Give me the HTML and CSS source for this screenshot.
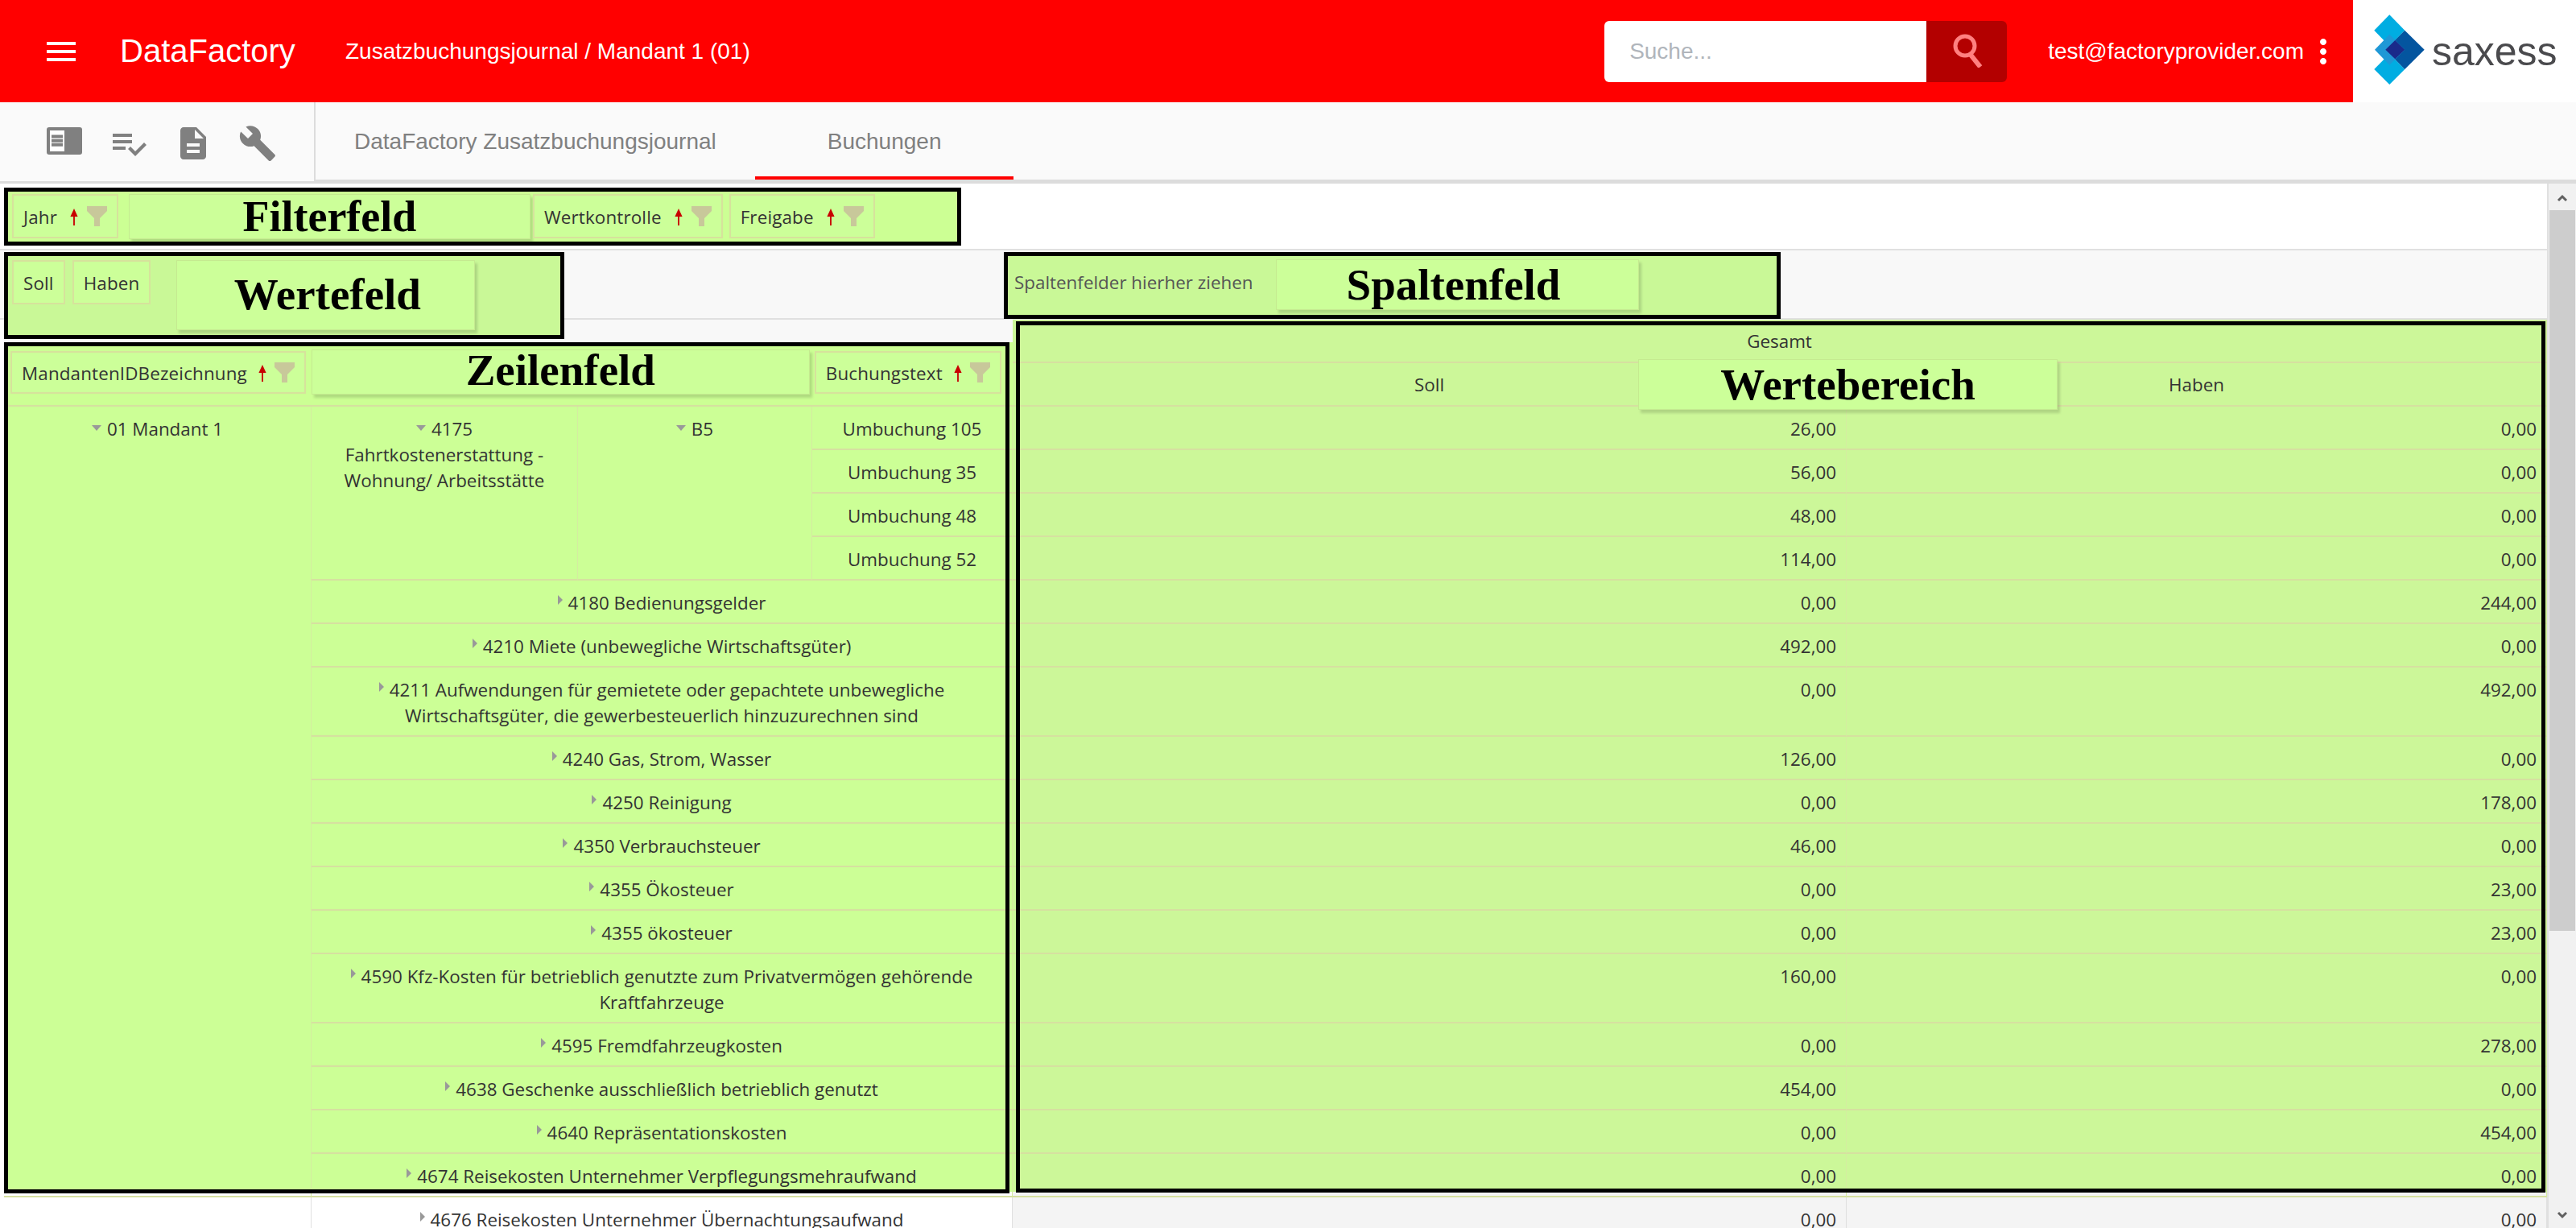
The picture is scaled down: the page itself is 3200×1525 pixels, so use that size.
FILE: index.html
```html
<!DOCTYPE html>
<html lang="de">

<head>
    <meta charset="UTF-8">
    <title>DataFactory Zusatzbuchungsjournal</title>
    <link rel="stylesheet" href="styles.css">
</head>

<body>
    <svg class="defs" width="0" height="0">
        <symbol id="sort-up" viewBox="0 0 12 24">
            <path d="M6 1l5 11H7v12H5V12H1z" fill="#c80000" />
        </symbol>
        <symbol id="funnel" viewBox="0 0 25 25">
            <path d="M0 0h25v6l-9 9v10H9V15L0 6z" fill="#c8c89a" />
        </symbol>
    </svg>

    <header class="topbar">
        <svg class="menu-icon" viewBox="0 0 24 24" fill="#fff">
            <path d="M3 18h18v-2H3v2zm0-5h18v-2H3v2zm0-7v2h18V6H3z" />
        </svg>
        <span class="brand">DataFactory</span>
        <span class="page-title">Zusatzbuchungsjournal / Mandant 1 (01)</span>
        <div class="search">
            <input class="search-input" type="text" placeholder="Suche...">
            <button class="search-button">
                <svg width="44" height="44" viewBox="0 0 44 44" fill="none" stroke="#ff8080">
                    <circle cx="17" cy="17" r="12" stroke-width="5" />
                    <path d="M24 28l12 15" stroke-width="6" />
                </svg>
            </button>
        </div>
        <span class="user">test@factoryprovider.com</span>
        <svg class="more-icon" viewBox="0 0 24 24" fill="#fff">
            <path d="M12 8c1.1 0 2-.9 2-2s-.9-2-2-2-2 .9-2 2 .9 2 2 2zm0 2c-1.1 0-2 .9-2 2s.9 2 2 2 2-.9 2-2-.9-2-2-2zm0 6c-1.1 0-2 .9-2 2s.9 2 2 2 2-.9 2-2-.9-2-2-2z" />
        </svg>
        <div class="logo">
            <svg width="98" height="127" viewBox="0 0 98 127">
                <path d="M26.3 37.7L45.3 18.3l19 19.4-19 19.6z" fill="#00ade2" />
                <path d="M26.3 86l19-19.3 19 19.3-19 19z" fill="#00ade2" />
                <path d="M64.3 37.7l24.4 24-24.4 24.3-24-24.3z" fill="#04559f" />
                <path d="M45.3 42.7l19 19-19 19-18.3-19z" fill="#1f98d6" />
                <path d="M52.3 50l12 11.7-12 11.6-12-11.6z" fill="#1a2a8a" />
            </svg>
            <span class="logo-text">saxess</span>
        </div>
    </header>

    <nav class="toolbar">
        <div class="tools">
            <svg viewBox="0 0 24 24" fill="#808080">
                <rect x="1" y="2" width="22" height="17" rx="1.5" />
                <path d="M3 4h9v13H3z" fill="#fff" />
                <path d="M4 6.8h7v2H4zm0 2.6h7v2H4zm0 2.5h7v2H4z" />
            </svg>
            <svg viewBox="0 0 24 24" fill="#808080">
                <path d="M14 10H2v2h12v-2zm0-4H2v2h12V6zM2 16h8v-2H2v2zm19.5-4.5L23 13l-6.99 7-4.51-4.5L13 14l3.01 3 5.49-5.5z" />
            </svg>
            <svg viewBox="0 0 24 24" fill="#808080">
                <path d="M14 2H6c-1.1 0-1.99.9-1.99 2L4 20c0 1.1.89 2 1.99 2H18c1.1 0 2-.9 2-2V8l-6-6zm2 16H8v-2h8v2zm0-4H8v-2h8v2zm-3-5V3.5L18.5 9H13z" />
            </svg>
            <svg viewBox="0 0 24 24" fill="#808080">
                <path d="M22.7 19l-9.1-9.1c.9-2.3.4-5-1.5-6.9-2-2-5-2.4-7.4-1.3L9 6 6 9 1.6 4.7C.4 7.1.9 10.1 2.9 12.1c1.9 1.9 4.6 2.4 6.9 1.5l9.1 9.1c.4.4 1 .4 1.4 0l2.3-2.3c.5-.4.5-1.1.1-1.4z" />
            </svg>
        </div>
        <div class="tabs">
            <a class="tab tab-first">DataFactory Zusatzbuchungsjournal</a>
            <a class="tab tab-active">Buchungen</a>
        </div>
    </nav>

    <main class="pivot">
        <div class="pivot-content">
            <section class="filter-row">
                <div class="field-frame filter-frame">
                    <span class="field">Jahr <svg class="sort"><use href="#sort-up" /></svg><svg class="funnel"><use href="#funnel" /></svg></span>
                    <span class="note note-filter">Filterfeld</span>
                    <span class="field field-gap">Wertkontrolle <svg class="sort"><use href="#sort-up" /></svg><svg class="funnel"><use href="#funnel" /></svg></span>
                    <span class="field">Freigabe <svg class="sort"><use href="#sort-up" /></svg><svg class="funnel"><use href="#funnel" /></svg></span>
                </div>
            </section>

            <section class="value-row">
                <div class="field-frame value-frame">
                    <span class="field">Soll</span>
                    <span class="field">Haben</span>
                    <span class="note note-value">Wertefeld</span>
                </div>
                <div class="field-frame column-frame">
                    <span class="hint">Spaltenfelder hierher ziehen</span>
                    <span class="note note-column">Spaltenfeld</span>
                </div>
            </section>

            <table class="grid">
                <colgroup>
                    <col class="col-a">
                    <col class="col-b">
                    <col class="col-c">
                    <col class="col-d">
                    <col class="col-soll">
                    <col class="col-haben">
                </colgroup>
                <thead>
                    <tr>
                        <th class="corner" colspan="4" rowspan="2">
                            <div class="row-fields">
                                <span class="field">MandantenIDBezeichnung <svg class="sort"><use href="#sort-up" /></svg><svg class="funnel"><use href="#funnel" /></svg></span>
                                <span class="note note-row">Zeilenfeld</span>
                                <span class="field">Buchungstext <svg class="sort"><use href="#sort-up" /></svg><svg class="funnel"><use href="#funnel" /></svg></span>
                            </div>
                        </th>
                        <th class="head" colspan="2">Gesamt</th>
                    </tr>
                    <tr>
                        <th class="head">Soll</th>
                        <th class="head">Haben</th>
                    </tr>
                </thead>
                <tbody>
                    <tr>
                        <td class="rh cut" rowspan="17"><i class="down"></i>01 Mandant 1</td>
                        <td class="rh" rowspan="4"><i class="down"></i>4175<br>Fahrtkostenerstattung -<br>Wohnung/ Arbeitsstätte</td>
                        <td class="rh" rowspan="4"><i class="down"></i>B5</td>
                        <td class="rh">Umbuchung 105</td>
                        <td class="val">26,00</td>
                        <td class="val">0,00</td>
                    </tr>
                    <tr>
                        <td class="rh">Umbuchung 35</td>
                        <td class="val">56,00</td>
                        <td class="val">0,00</td>
                    </tr>
                    <tr>
                        <td class="rh">Umbuchung 48</td>
                        <td class="val">48,00</td>
                        <td class="val">0,00</td>
                    </tr>
                    <tr>
                        <td class="rh">Umbuchung 52</td>
                        <td class="val">114,00</td>
                        <td class="val">0,00</td>
                    </tr>
                    <tr>
                        <td class="rh" colspan="3"><i class="right"></i>4180 Bedienungsgelder</td>
                        <td class="val">0,00</td>
                        <td class="val">244,00</td>
                    </tr>
                    <tr>
                        <td class="rh" colspan="3"><i class="right"></i>4210 Miete (unbewegliche Wirtschaftsgüter)</td>
                        <td class="val">492,00</td>
                        <td class="val">0,00</td>
                    </tr>
                    <tr>
                        <td class="rh" colspan="3"><i class="right"></i>4211 Aufwendungen für gemietete oder gepachtete unbewegliche<br>Wirtschaftsgüter, die gewerbesteuerlich hinzuzurechnen sind</td>
                        <td class="val">0,00</td>
                        <td class="val">492,00</td>
                    </tr>
                    <tr>
                        <td class="rh" colspan="3"><i class="right"></i>4240 Gas, Strom, Wasser</td>
                        <td class="val">126,00</td>
                        <td class="val">0,00</td>
                    </tr>
                    <tr>
                        <td class="rh" colspan="3"><i class="right"></i>4250 Reinigung</td>
                        <td class="val">0,00</td>
                        <td class="val">178,00</td>
                    </tr>
                    <tr>
                        <td class="rh" colspan="3"><i class="right"></i>4350 Verbrauchsteuer</td>
                        <td class="val">46,00</td>
                        <td class="val">0,00</td>
                    </tr>
                    <tr>
                        <td class="rh" colspan="3"><i class="right"></i>4355 Ökosteuer</td>
                        <td class="val">0,00</td>
                        <td class="val">23,00</td>
                    </tr>
                    <tr>
                        <td class="rh" colspan="3"><i class="right"></i>4355 ökosteuer</td>
                        <td class="val">0,00</td>
                        <td class="val">23,00</td>
                    </tr>
                    <tr>
                        <td class="rh" colspan="3"><i class="right"></i>4590 Kfz-Kosten für betrieblich genutzte zum Privatvermögen gehörende<br>Kraftfahrzeuge</td>
                        <td class="val">160,00</td>
                        <td class="val">0,00</td>
                    </tr>
                    <tr>
                        <td class="rh" colspan="3"><i class="right"></i>4595 Fremdfahrzeugkosten</td>
                        <td class="val">0,00</td>
                        <td class="val">278,00</td>
                    </tr>
                    <tr>
                        <td class="rh" colspan="3"><i class="right"></i>4638 Geschenke ausschließlich betrieblich genutzt</td>
                        <td class="val">454,00</td>
                        <td class="val">0,00</td>
                    </tr>
                    <tr>
                        <td class="rh" colspan="3"><i class="right"></i>4640 Repräsentationskosten</td>
                        <td class="val">0,00</td>
                        <td class="val">454,00</td>
                    </tr>
                    <tr>
                        <td class="rh cut" colspan="3"><i class="right"></i>4674 Reisekosten Unternehmer Verpflegungsmehraufwand</td>
                        <td class="val cut">0,00</td>
                        <td class="val cut">0,00</td>
                    </tr>
                    <tr class="plain">
                        <td class="blank"></td>
                        <td class="rh" colspan="3"><i class="right"></i>4676 Reisekosten Unternehmer Übernachtungsaufwand</td>
                        <td class="val">0,00</td>
                        <td class="val">0,00</td>
                    </tr>
                </tbody>
            </table>

            <div class="frame frame-rows"></div>
            <div class="frame frame-values">
                <span class="note note-area">Wertebereich</span>
            </div>
        </div>

        <aside class="scrollbar">
            <svg class="scroll-arrow" viewBox="0 0 16 12" fill="none" stroke="#606060" stroke-width="3">
                <path d="M3 9l5-5 5 5" />
            </svg>
            <div class="scroll-thumb"></div>
            <svg class="scroll-arrow scroll-down" viewBox="0 0 16 12" fill="none" stroke="#606060" stroke-width="3">
                <path d="M3 3l5 5 5-5" />
            </svg>
        </aside>
    </main>
</body>

</html>
```

FILE: styles.css
```css
body {
    margin: 0;
    height: 1525px;
    overflow: hidden;
    background-color: #fff;
    font-family: "Open Sans", "Liberation Sans", sans-serif;
    font-size: 22.4px;
    color: #333;
}

.defs {
    position: absolute;
}

/* top bar */

.topbar {
    display: flex;
    align-items: center;
    height: 127px;
    padding-left: 52px;
    background-color: #f00;
    color: #fff;
    font-family: "Liberation Sans", Arial, sans-serif;
}

.menu-icon {
    width: 48px;
    height: 48px;
    margin-right: 49px;
}

.brand {
    width: 280px;
    font-size: 40px;
}

.page-title {
    font-size: 28px;
}

.search {
    display: flex;
    height: 76px;
    margin-left: auto;
}

.search-input {
    box-sizing: border-box;
    width: 400px;
    padding: 0 31px;
    border: 0;
    border-radius: 6px 0 0 6px;
    font-family: "Liberation Sans", Arial, sans-serif;
    font-size: 28px;
}

.search-input::placeholder {
    color: #b0b5bb;
}

.search-button {
    width: 100px;
    padding: 0 0 0 6px;
    border: 0;
    border-radius: 0 6px 6px 0;
    background-color: #b30000;
}

.user {
    margin-left: 51px;
    font-size: 28px;
}

.more-icon {
    width: 48px;
    height: 48px;
    margin-right: 13px;
}

.logo {
    display: flex;
    align-items: center;
    width: 277px;
    height: 127px;
    background-color: #fff;
}

.logo-text {
    font-size: 50px;
    color: #4a4a4d;
}

/* toolbar and tabs */

.toolbar {
    display: flex;
    box-sizing: border-box;
    height: 101px;
    border-bottom: 3px solid #dcdcdc;
    background-color: #fafafa;
    font-family: "Liberation Sans", Arial, sans-serif;
}

.tools {
    display: flex;
    box-sizing: border-box;
    width: 392px;
    gap: 32px;
    padding: 27px 0 0 56px;
    border-right: 2px solid #dcdcdc;
}

.tools svg {
    width: 48px;
    height: 48px;
}

.tabs {
    display: flex;
    flex: 1;
    border-bottom: 2px solid #dcdcdc;
}

.tab {
    box-sizing: border-box;
    height: 96px;
    padding: 33px 90px 0;
    font-size: 28px;
    color: #808080;
}

.tab-first {
    padding: 33px 48px 0;
}

.tab-active {
    border-bottom: 4px solid #f00;
}

/* pivot */

.pivot {
    display: flex;
}

.pivot-content {
    position: relative;
    box-sizing: border-box;
    width: 3166px;
    border-right: 2px solid #e0e0e0;
}

.filter-row {
    box-sizing: border-box;
    height: 83px;
    padding: 5px 0 0 5px;
    border-bottom: 2px solid #e0e0e0;
}

.value-row {
    display: flex;
    align-items: flex-start;
    box-sizing: border-box;
    height: 86px;
    padding: 2px 0 0 5px;
    border-bottom: 2px solid #e0e0e0;
    background-color: #f8f8f8;
}

.field-frame {
    position: relative;
    z-index: 2;
    display: flex;
    box-sizing: border-box;
    border: 5px solid #000;
    background-color: #c9f897;
}

.filter-frame {
    align-items: flex-start;
    width: 1189px;
    height: 72px;
    padding: 3px 5px;
    background-color: #ccff94;
}

.value-frame {
    align-items: flex-start;
    width: 696px;
    height: 108px;
    padding: 5px;
    gap: 9px;
}

.column-frame {
    align-items: flex-start;
    width: 965px;
    height: 83px;
    margin-left: 546px;
    padding: 4px 0 0 8px;
}

.hint {
    width: 325px;
    height: 60px;
    line-height: 58px;
    color: #555;
}

.field {
    display: inline-flex;
    align-items: center;
    box-sizing: border-box;
    height: 55px;
    padding: 2px 12px 0;
    border: 2px solid #d6e29c;
    background-color: #ccff99;
    letter-spacing: 0.15px;
    white-space: pre;
}

.field-gap {
    margin-right: 8px;
}

.sort {
    position: relative;
    top: -1px;
    width: 12px;
    height: 22px;
    margin: 0 10px 0 9px;
}

.funnel {
    position: relative;
    top: -1px;
    width: 25px;
    height: 25px;
}

.note {
    box-sizing: border-box;
    display: flex;
    justify-content: center;
    align-items: center;
    border: 1px solid #c5ea90;
    background-color: #ccff99;
    box-shadow: 3px 4px 3px rgba(0, 0, 0, 0.14);
    font-family: "Liberation Serif", "Times New Roman", serif;
    font-weight: bold;
    font-size: 55px;
    color: #000;
}

.note-filter {
    width: 499px;
    height: 56px;
    margin: 0 3px 0 13px;
    font-size: 54px;
}

.note-value {
    width: 371px;
    height: 87px;
    margin-left: 23px;
    padding: 0 0 3px 4px;
}

.note-column {
    width: 451px;
    height: 63px;
    padding-right: 10px;
}

.note-row {
    width: 619px;
    height: 56px;
    margin: -2px 6px 0 7px;
    padding-bottom: 5px;
}

.note-area {
    position: absolute;
    left: 768px;
    top: 42px;
    width: 521px;
    height: 63px;
}

.grid {
    width: 3159px;
    margin-left: 5px;
    border-collapse: separate;
    border-spacing: 0;
    table-layout: fixed;
}

.col-a { width: 382px; }
.col-b { width: 331px; }
.col-c { width: 291px; }
.col-d { width: 249px; }
.col-soll { width: 1036px; }

.grid th,
.grid td {
    box-sizing: border-box;
    padding: 12px 12px 8px;
    border-bottom: 2px solid #d6e0a0;
    border-right: 1px solid #d4eca0;
    line-height: 32px;
    vertical-align: top;
    font-weight: normal;
}

.grid .head {
    padding: 11px 12px 9px;
}

.grid .corner {
    padding: 0;
    height: 108px;
    border-right: 0;
    vertical-align: bottom;
    background-color: #f8f8f8;
}

.row-fields {
    display: flex;
    align-items: flex-start;
    box-sizing: border-box;
    height: 78px;
    padding: 11px 8px 0;
    background-color: #ccff94;
    text-align: left;
}

.row-fields .field {
    height: 53px;
}

.row-fields .sort {
    margin: 0 9px 0 7px;
}

.head {
    height: 54px;
    text-align: center;
    background-color: #ccf799;
}

.rh {
    height: 54px;
    text-align: center;
    background-color: #ccff96;
}

.val {
    height: 54px;
    text-align: right;
    background-color: #ccf799;
}

.rh.cut {
    background: linear-gradient(#ccff96 calc(100% - 5px), #fff 0);
}

.val.cut {
    background: linear-gradient(#ccf799 calc(100% - 5px), #f4f4f4 0);
}

.plain td {
    border-color: #e0e0e0;
}

.plain .rh,
.plain .blank {
    background-color: #fff;
}

.plain .val {
    background-color: #f4f4f4;
}

.down,
.right {
    display: inline-block;
    width: 0;
    height: 0;
    margin-right: 7px;
    border-style: solid;
    border-color: transparent;
    vertical-align: 6px;
}

.down {
    border-width: 7px 6px 0;
    border-top-color: #999;
}

.right {
    border-width: 6px 0 6px 6px;
    border-left-color: #999;
}

.frame {
    position: absolute;
    z-index: 3;
    box-sizing: border-box;
    border: 5px solid #000;
}

.frame-rows {
    left: 5px;
    top: 197px;
    width: 1249px;
    height: 1057px;
}

.frame-values {
    left: 1262px;
    top: 171px;
    width: 1900px;
    height: 1082px;
}

/* scrollbar */

.scrollbar {
    display: flex;
    flex-direction: column;
    align-items: center;
    width: 34px;
    height: 1298px;
    background-color: #f1f1f1;
}

.scroll-arrow {
    flex: none;
    width: 16px;
    height: 12px;
    margin: 12px 0 9px;
}

.scroll-thumb {
    flex: none;
    width: 32px;
    height: 895px;
    background-color: #cdcdcd;
}

.scroll-down {
    margin-top: 347px;
}
```
